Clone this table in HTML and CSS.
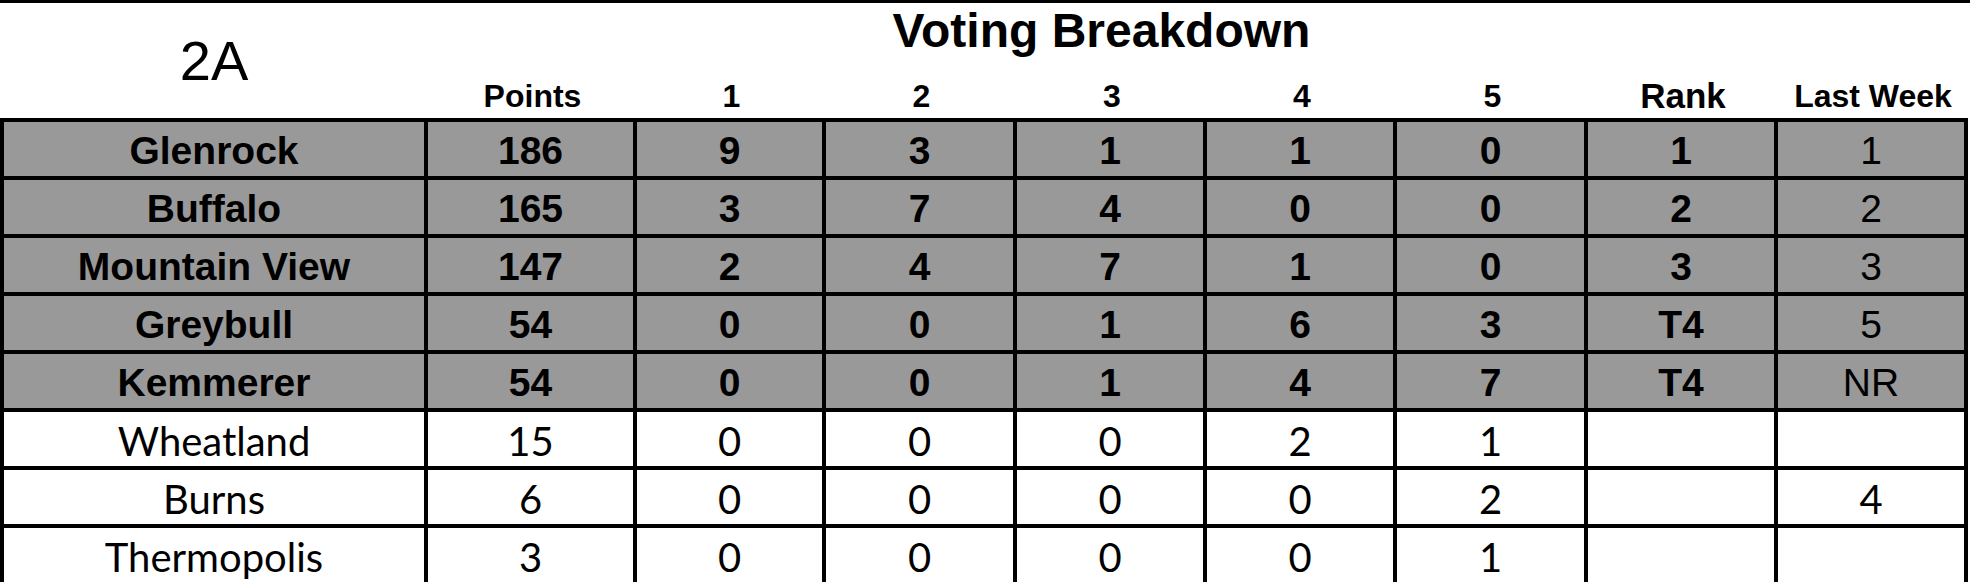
FILE: index.html
```html
<!DOCTYPE html>
<html lang="en">
<head>
<meta charset="utf-8">
<title>2A Voting Breakdown</title>
<link rel="stylesheet" href="styles.css">
</head>
<body>
<div class="page">
  <div class="topline"></div>
  <div class="head">
    <div class="cls">2A</div>
    <div class="title">Voting Breakdown</div>
    <div class="lbl col-points">Points</div>
    <div class="lbl">1</div>
    <div class="lbl">2</div>
    <div class="lbl">3</div>
    <div class="lbl">4</div>
    <div class="lbl">5</div>
    <div class="lbl lbl-rank">Rank</div>
    <div class="lbl">Last Week</div>
  </div>
  <div class="table">
    <div class="row ranked first">
      <div class="cell">Glenrock</div><div class="cell">186</div><div class="cell">9</div><div class="cell">3</div><div class="cell">1</div><div class="cell">1</div><div class="cell">0</div><div class="cell">1</div><div class="cell last">1</div>
    </div>
    <div class="row ranked">
      <div class="cell">Buffalo</div><div class="cell">165</div><div class="cell">3</div><div class="cell">7</div><div class="cell">4</div><div class="cell">0</div><div class="cell">0</div><div class="cell">2</div><div class="cell last">2</div>
    </div>
    <div class="row ranked">
      <div class="cell">Mountain View</div><div class="cell">147</div><div class="cell">2</div><div class="cell">4</div><div class="cell">7</div><div class="cell">1</div><div class="cell">0</div><div class="cell">3</div><div class="cell last">3</div>
    </div>
    <div class="row ranked">
      <div class="cell">Greybull</div><div class="cell">54</div><div class="cell">0</div><div class="cell">0</div><div class="cell">1</div><div class="cell">6</div><div class="cell">3</div><div class="cell">T4</div><div class="cell last">5</div>
    </div>
    <div class="row ranked">
      <div class="cell">Kemmerer</div><div class="cell">54</div><div class="cell">0</div><div class="cell">0</div><div class="cell">1</div><div class="cell">4</div><div class="cell">7</div><div class="cell">T4</div><div class="cell last">NR</div>
    </div>
    <div class="row other">
      <div class="cell">Wheatland</div><div class="cell">15</div><div class="cell">0</div><div class="cell">0</div><div class="cell">0</div><div class="cell">2</div><div class="cell">1</div><div class="cell"></div><div class="cell last"></div>
    </div>
    <div class="row other">
      <div class="cell">Burns</div><div class="cell">6</div><div class="cell">0</div><div class="cell">0</div><div class="cell">0</div><div class="cell">0</div><div class="cell">2</div><div class="cell"></div><div class="cell last">4</div>
    </div>
    <div class="row other">
      <div class="cell">Thermopolis</div><div class="cell">3</div><div class="cell">0</div><div class="cell">0</div><div class="cell">0</div><div class="cell">0</div><div class="cell">1</div><div class="cell"></div><div class="cell last"></div>
    </div>
  </div>
</div>
</body>
</html>
```

FILE: styles.css
```css
html, body {
  margin: 0;
  padding: 0;
  background: #ffffff;
  overflow: hidden;
}

body {
  width: 1970px;
  height: 582px;
  font-family: "Liberation Sans", Arial, sans-serif;
  color: #000;
}

.page {
  width: 1970px;
}

.topline {
  height: 3px;
  background: #000;
}

.head {
  display: grid;
  grid-template-columns: 428px 209px 189px 191px 190px 190px 191px 190px 190px;
  grid-template-rows: 55px 60px;
}

.cls {
  grid-row: 1 / 3;
  grid-column: 1;
  justify-self: center;
  align-self: start;
  padding-top: 30px;
  font-size: 56px;
  line-height: 56px;
}

.title {
  grid-row: 1;
  grid-column: 3 / 8;
  justify-self: center;
  align-self: start;
  padding-top: 4px;
  padding-right: 22px;
  font-size: 48px;
  line-height: 48px;
  font-weight: bold;
}

.lbl {
  grid-row: 2;
  align-self: end;
  justify-self: center;
  padding-bottom: 6px;
  font-size: 32px;
  line-height: 32px;
  font-weight: bold;
}

.col-points {
  grid-column: 2;
}

.lbl-rank {
  font-size: 35px;
  line-height: 35px;
  padding-bottom: 5px;
}

.row {
  display: grid;
  grid-template-columns: 428px 209px 189px 191px 190px 190px 191px 190px 190px;
  height: 58px;
}

.row.first {
  height: 62px;
}

.cell {
  box-sizing: border-box;
  display: flex;
  align-items: center;
  justify-content: center;
  border-right: 4px solid #000;
  border-bottom: 4px solid #000;
  line-height: 1;
  white-space: nowrap;
}

.cell:first-child {
  border-left: 4px solid #000;
}

.row.first .cell {
  border-top: 4px solid #000;
}

.ranked .cell {
  background: #999999;
  font-family: "Liberation Sans", Arial, sans-serif;
  font-weight: bold;
  font-size: 39px;
  padding-top: 3px;
}

.ranked .cell.last {
  font-weight: normal;
}

.other .cell {
  background: #ffffff;
  font-family: Lato, "Open Sans", sans-serif;
  font-size: 40px;
  padding-top: 3px;
}
```
